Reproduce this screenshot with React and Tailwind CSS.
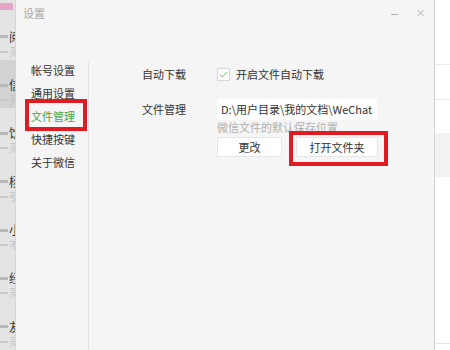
import React from "react";

const font = { fontFamily: '"Noto Sans CJK SC", "Noto Sans", sans-serif' };

function ChatRow({ ch, sub, dark }) {
  return (
    <div className={`h-[49px] pt-[18px] flex flex-col ${dark ? "bg-[#d2d2d2]" : ""}`}>
      <div className="h-[14px] flex items-center">
        <div className="w-[8px] h-[3px] bg-[#b8b8b8] shrink-0" />
        <div className="ml-[1px] text-[12px] leading-[14px] text-[#333] whitespace-nowrap">{ch}</div>
      </div>
      <div className="h-[12px] flex items-center mt-[2px]">
        <div className="w-[8px] h-[2px] bg-[#c9c9c9] shrink-0" />
        <div className="ml-[1px] text-[10px] leading-[12px] text-[#c0c0c0] whitespace-nowrap">{sub}</div>
      </div>
    </div>
  );
}

export default function App() {
  const navItems = ["帐号设置", "通用设置", "文件管理", "快捷按键", "关于微信"];
  return (
    <div className="w-[450px] h-[350px] overflow-hidden flex bg-white" style={font}>
      {/* background chat list */}
      <div className="w-[15px] shrink-0 overflow-hidden bg-[#e4e4e4] flex flex-col">
        <div className="h-[12px] pt-[3px]">
          <div className="w-[13px] h-[7px] bg-[#e3a6c9]" />
        </div>
        <ChatRow ch="阅" sub="灵" />
        <ChatRow ch="信" sub="灵" dark />
        <ChatRow ch="饮" sub="灵" />
        <ChatRow ch="杨" sub="引" />
        <ChatRow ch="小" sub="不" />
        <ChatRow ch="经" sub="灵" />
        <ChatRow ch="友" sub="灵" />
      </div>

      {/* dialog */}
      <div className="w-[420px] shrink-0 bg-[#f5f5f5] border-l border-r border-[#d6d6d6] flex flex-col">
        <div className="h-[26px] flex items-center pl-[7px] pr-[10px]">
          <span className="text-[11px] leading-[26px] text-[#a8a8a8]">设置</span>
          <div className="ml-auto flex items-center gap-[19px]">
            <svg width="7" height="8" viewBox="0 0 7 8">
              <line x1="0" y1="5.5" x2="7" y2="5.5" stroke="#b0b0b0" strokeWidth="1" />
            </svg>
            <svg width="7" height="8" viewBox="0 0 7 8">
              <path d="M0.5 1 L6.5 7 M6.5 1 L0.5 7" stroke="#b0b0b0" strokeWidth="1" fill="none" />
            </svg>
          </div>
        </div>

        <div className="flex flex-1">
          <div className="w-[72px] shrink-0 pt-[33px] flex flex-col">
            {navItems.map((t) => (
              <div
                key={t}
                className={`relative h-[23px] leading-[23px] pl-[15px] text-[11px] ${
                  t === "文件管理" ? "text-[#45a54b]" : "text-[#333]"
                }`}
              >
                {t}
                {t === "文件管理" && (
                  <div className="absolute left-[9px] top-[-6px] w-[62px] h-[32px] border-4 border-[#e11b22]" />
                )}
              </div>
            ))}
          </div>
          <div className="w-px bg-[#e0e0e0] mt-[36px]" />
          <div className="w-px bg-[#f9f9f9] mt-[36px]" />

          <div className="flex-1 pl-[52px] pt-[38px] flex flex-col">
            <div className="h-[20px] flex items-center">
              <div className="w-[75px] text-[11px] text-[#333]">自动下载</div>
              <div className="w-[13px] h-[13px] bg-white border border-[#d6d6d6] flex items-center justify-center">
                <svg width="9" height="7" viewBox="0 0 9 7">
                  <path d="M0.8 3.5 L3.3 6 L8.3 0.8" stroke="#6cbf70" strokeWidth="1" fill="none" />
                </svg>
              </div>
              <div className="ml-[6px] text-[11px] text-[#333]">开启文件自动下载</div>
            </div>

            <div className="mt-[15px] h-[21px] flex items-center">
              <div className="w-[75px] text-[11px] text-[#333]">文件管理</div>
              <div className="w-[160px] h-[21px] bg-white pl-[4px] overflow-hidden whitespace-nowrap text-[11px] leading-[21px] text-[#333]">
                D:\用户目录\我的文档\WeChat
              </div>
            </div>

            <div className="pl-[75px] h-[14px] text-[11px] leading-[14px] text-[#b0b0b0]">
              微信文件的默认保存位置
            </div>

            <div className="pl-[75px] mt-[3px] flex gap-[14px]">
              <div className="w-[65px] h-[20px] bg-white border border-[#e6e6e6] text-[11px] leading-[18px] text-center text-[#333]">
                更改
              </div>
              <div className="relative w-[82px] h-[20px] bg-white border border-[#e6e6e6] text-[11px] leading-[18px] text-center text-[#333]">
                打开文件夹
                <div className="absolute left-[-8px] top-[-7px] w-[99px] h-[35px] border-4 border-[#e11b22]" />
              </div>
            </div>
          </div>
        </div>
      </div>

      {/* right background */}
      <div className="flex-1 bg-white flex flex-col">
        <div className="h-[65px] border-b border-[#ececec]" />
        <div className="h-[35px] border-b border-[#ececec]" />
        <div className="h-[33px]" />
        <div className="h-[44px] bg-[#f2f2f2]" />
        <div className="h-[167px] border-b border-[#e6e6e6]" />
      </div>
    </div>
  );
}
